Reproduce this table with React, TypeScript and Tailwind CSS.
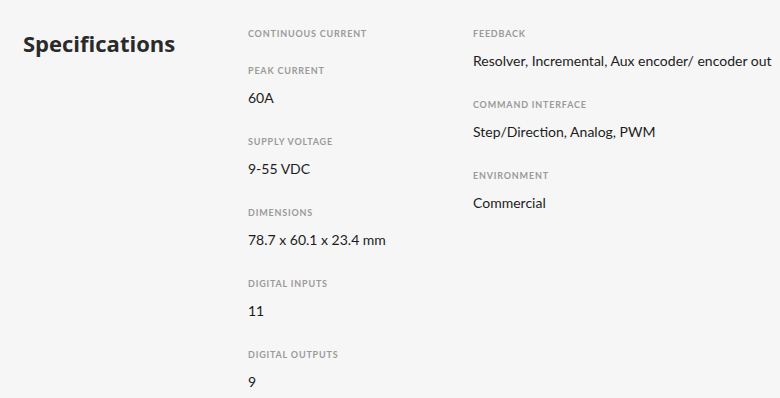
const left = [
  { label: 'Continuous Current', value: '' },
  { label: 'Peak Current', value: '60A' },
  { label: 'Supply Voltage', value: '9-55 VDC' },
  { label: 'Dimensions', value: '78.7 x 60.1 x 23.4 mm' },
  { label: 'Digital Inputs', value: '11' },
  { label: 'Digital Outputs', value: '9' },
];

const right = [
  { label: 'Feedback', value: 'Resolver, Incremental, Aux encoder/ encoder out' },
  { label: 'Command Interface', value: 'Step/Direction, Analog, PWM' },
  { label: 'Environment', value: 'Commercial' },
];

function SpecItem({ label, value }: { label: string; value: string }) {
  return (
    <div className={value ? 'pb-[28px]' : 'pb-[25px]'}>
      <div className="h-[12px] text-[9px] leading-[12px] font-bold uppercase tracking-[0.09em] text-[#9a9a9a]">
        {label}
      </div>
      {value && (
        <div className="mt-[11px] text-[14px] leading-[20px] text-[#1c1c1c] whitespace-nowrap">{value}</div>
      )}
    </div>
  );
}

export default function App() {
  return (
    <div
      className="w-[780px] h-[398px] overflow-hidden bg-[#f6f6f6] flex"
      style={{ fontFamily: 'Lato, "Noto Sans", sans-serif' }}
    >
      {/* Heading */}
      <div className="w-[248px] pl-[23px] pt-[28px]">
        <h2
          className="text-[22px] leading-[30px] font-bold text-[#2a2a2a]"
          style={{ fontFamily: '"Open Sans", "Noto Sans", sans-serif' }}
        >
          Specifications
        </h2>
      </div>

      {/* Left column */}
      <div className="w-[225px] pt-[28px]">
        {left.map((s) => (
          <SpecItem key={s.label} {...s} />
        ))}
      </div>

      {/* Right column */}
      <div className="flex-1 pt-[28px]">
        {right.map((s) => (
          <SpecItem key={s.label} {...s} />
        ))}
      </div>
    </div>
  );
}
